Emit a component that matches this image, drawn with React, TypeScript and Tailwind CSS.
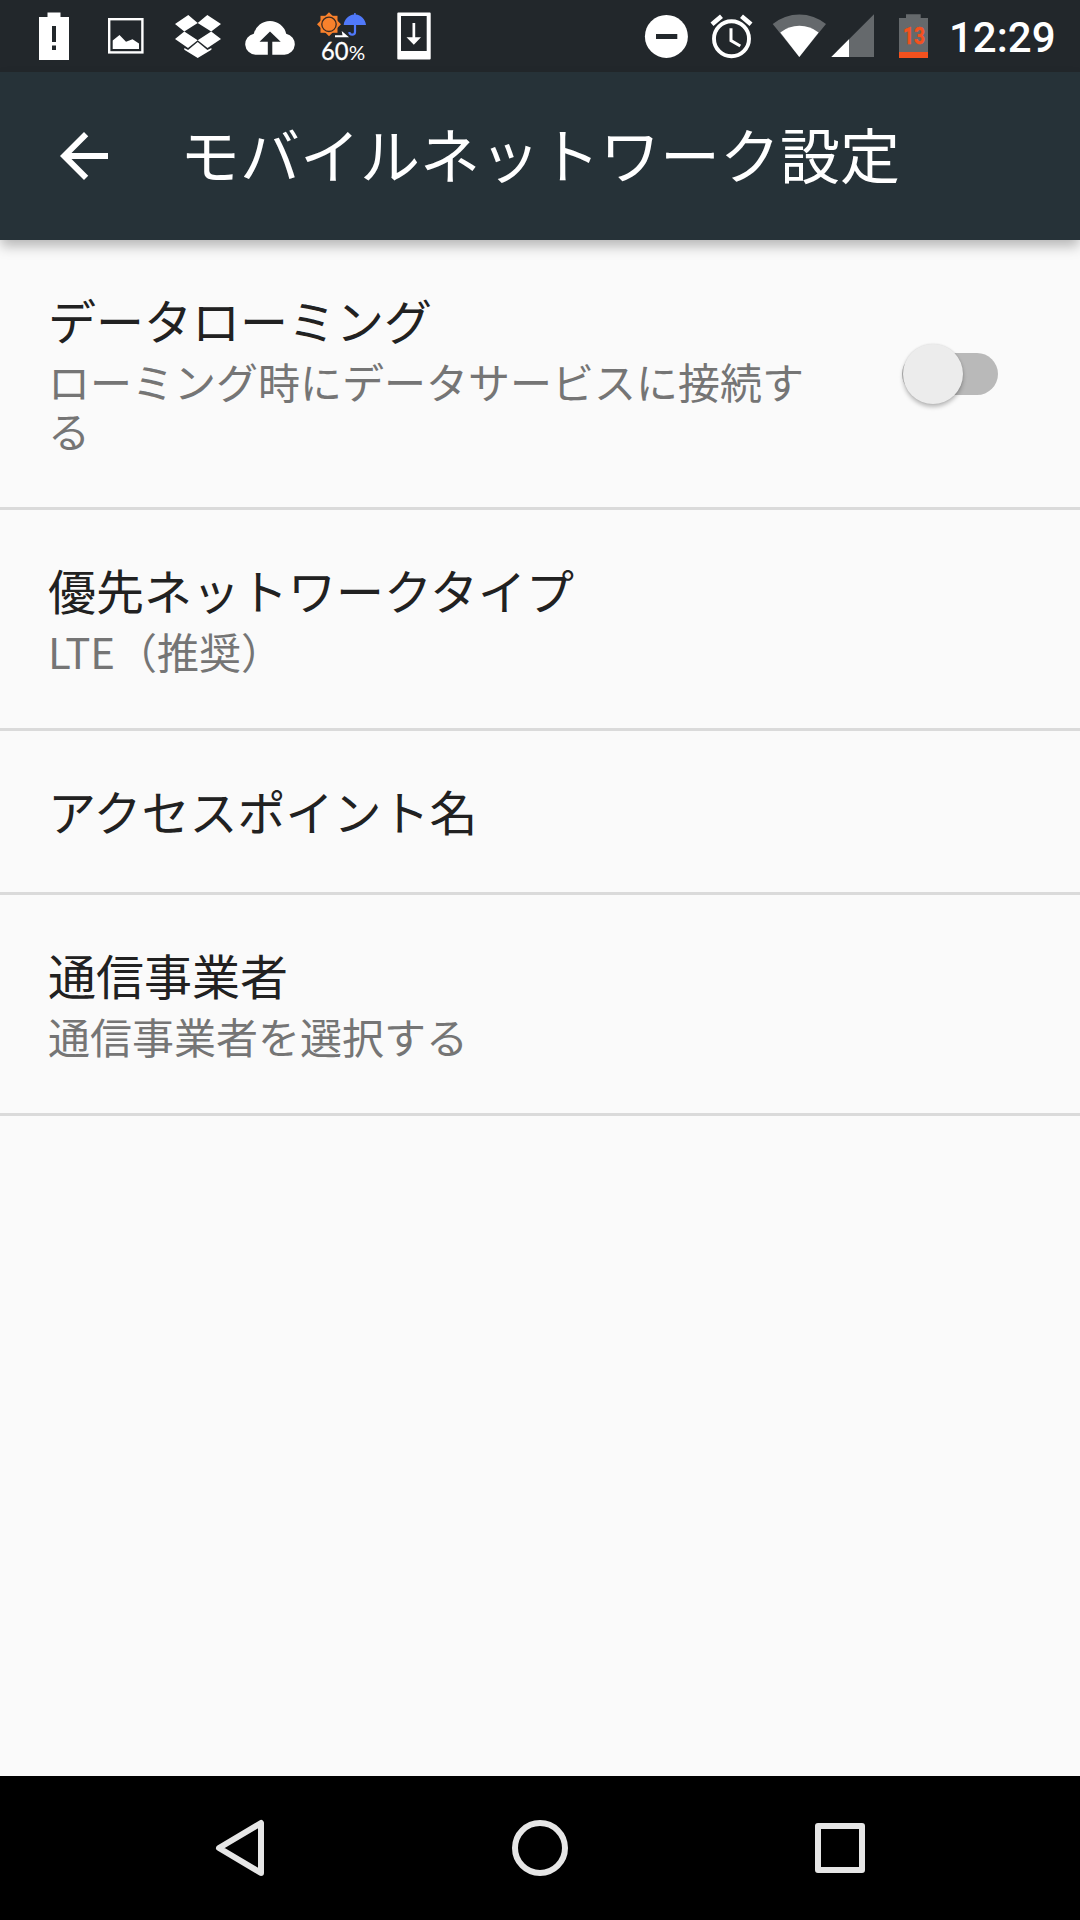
import { useState } from 'react';

interface Preference {
  id: string;
  title: string;
  summary?: string;
  hasSwitch?: boolean;
}

const preferences: Preference[] = [
  {
    id: 'roaming',
    title: 'データローミング',
    summary: 'ローミング時にデータサービスに接続する',
    hasSwitch: true,
  },
  { id: 'type', title: '優先ネットワークタイプ', summary: 'LTE（推奨）' },
  { id: 'apn', title: 'アクセスポイント名' },
  { id: 'carrier', title: '通信事業者', summary: '通信事業者を選択する' },
];

function NotificationIcons() {
  return (
    <div className="flex text-white">
      {/* battery alert */}
      <svg className="size-[72px]" viewBox="0 0 72 72" fill="currentColor">
        <path
          fillRule="evenodd"
          d="M29.5 12.5h13V17H51v43H21V17h8.500zM34 26v16h4V26zM34 45.500v4.500h4v-4.500z"
        />
      </svg>
      {/* picture */}
      <svg className="size-[72px]" viewBox="0 0 72 72" fill="currentColor">
        <rect x="19.2" y="19.200" width="33.200" height="33.200" fill="none" stroke="currentColor" strokeWidth="2.400" />
        <path d="M22.700 49v-8.500L29.500 35l6.500 6.700 6.500-2.500 6.500 4.300V49z" />
      </svg>
      {/* dropbox */}
      <svg className="size-[72px]" viewBox="0 0 72 72" fill="currentColor">
        <path d="M26.300 15 13 24l9.300 7.500L35.700 23zM45.300 15 35.700 23l13.500 8.500L59 24z" />
        <path d="M22.300 31.500 13 39l13 9 9.700-7.700zM49.200 31.500l-13.500 8.800 9.800 7.700L59 39z" />
        <path d="m22.300 48 3.800 2 9.600-8 9.700 8 4-2v1.800L35.700 58l-13.400-8.200z" />
      </svg>
      {/* upload */}
      <svg className="size-[72px]" viewBox="0 0 72 72" fill="currentColor">
        <path d="M21.500 54.700a10.600 10.600 0 0 1-1.700-21 16.700 16.700 0 0 1 32.400 0A10.600 10.600 0 0 1 50.500 54.700H38.300V41.700h8.400L36 31.500 25.500 41.700h8.300v13z" />
      </svg>
      {/* weather */}
      <svg className="size-[72px]" viewBox="0 0 72 72">
        <g fill="#f8812c">
          <rect x="14.500" y="15.800" width="17" height="17" />
          <rect x="14.500" y="15.800" width="17" height="17" transform="rotate(45 23 24.300)" />
        </g>
        <circle cx="23" cy="24.300" r="7.200" fill="none" stroke="#3a2a22" strokeWidth="1.300" />
        <path d="M37.700 25c.6-6 5-10 10.400-10.500V13h1.600v1.500C55 15 59.400 19 60 25z" fill="#5079fb" />
        <path d="M49 24v8c0 3.600-5.600 3.600-5.600 0" fill="none" stroke="#5079fb" strokeWidth="2.200" />
        <path d="M29 35.300h7.500L35.700 31l7.300 6.300H29z" fill="#fff" />
        <text x="15" y="60" fill="#fff" stroke="#fff" strokeWidth="0.300" fontSize="25" textLength="27.500" lengthAdjust="spacingAndGlyphs" className="font-['Lato',sans-serif]">60</text>
        <text x="42.700" y="60" fill="#fff" fontSize="19.500" textLength="16.500" lengthAdjust="spacingAndGlyphs" className="font-['Lato',sans-serif]">%</text>
      </svg>
      {/* system update */}
      <svg className="size-[72px]" viewBox="0 0 72 72" fill="currentColor">
        <path
          fillRule="evenodd"
          d="M20.200 12.500h31.600q.9 0 .9.900v45.200q0 .9-.9.900H20.200q-.9 0-.9-.9V13.400q0-.9.900-.9zM23 16v35h25.700V16z"
        />
        <path d="M34.500 23h2.700v14.300H43l-7.200 7.400-7.300-7.400h6z" />
      </svg>
    </div>
  );
}

function SystemIcons() {
  return (
    <div className="flex items-center text-white">
      {/* do not disturb */}
      <svg className="h-[72px] w-12" viewBox="0 0 48 72">
        <circle cx="24.400" cy="36.400" r="21.500" fill="currentColor" />
        <rect x="14" y="34" width="21.300" height="5" fill="#22282c" />
      </svg>
      {/* alarm */}
      <svg className="ml-[18px] h-[72px] w-12" viewBox="0 0 48 72" fill="none" stroke="currentColor">
        <circle cx="23.500" cy="38.700" r="17.500" strokeWidth="3.900" />
        <path d="M23 28.300v12.300l9.300 5.400" strokeWidth="3" />
        <path d="m4 24.300 9.500-8M43 24.300l-9.500-8" strokeWidth="4.600" />
      </svg>
      {/* wifi */}
      <svg className="ml-[15px] h-[72px] w-14" viewBox="0 0 56 72">
        <path d="M28.300 57 1.700 24a42.400 42.400 0 0 1 53.300 0z" fill="#65696c" />
        <path d="M28.300 57 9.300 32.400a31 31 0 0 1 38.300 0z" fill="currentColor" />
      </svg>
      {/* cell signal */}
      <svg className="ml-1 h-[72px] w-11" viewBox="0 0 44 72">
        <path d="M.3 57H43V14.300z" fill="#65696c" />
        <path d="M.3 57h17.700V39.300z" fill="currentColor" />
      </svg>
      {/* battery */}
      <svg className="ml-[21px] h-[72px] w-9" viewBox="0 0 36 72">
        <path d="M10 14.300h14.700V18H32v34H3V18h7z" fill="#65696c" />
        <rect x="3" y="52" width="29" height="6" fill="#f4511e" />
        <text x="7" y="44.300" fill="#f4511e" stroke="#f4511e" strokeWidth="0.500" fontSize="23" fontWeight="700" textLength="22" lengthAdjust="spacingAndGlyphs" className="font-['Roboto',sans-serif]">13</text>
      </svg>
      <span className="ml-[17px] w-[107px] pt-[3px] font-['Roboto',sans-serif] text-[42px] font-medium leading-[72px]">12:29</span>
    </div>
  );
}

function Switch({ checked, onToggle }: { checked: boolean; onToggle: () => void }) {
  return (
    <button
      role="switch"
      aria-checked={checked}
      onClick={onToggle}
      className="mt-0.5 flex h-[60px] w-24 items-center"
    >
      <span className="flex h-[42px] w-full items-center rounded-full bg-[#b9b9b9]">
        <span
          className={`mt-px size-[60px] shrink-0 rounded-full bg-[#ececec] shadow-[0_3px_4px_rgba(0,0,0,0.25),0_0_2px_rgba(0,0,0,0.12)] ${checked ? 'ml-auto' : 'ml-px'}`}
        />
      </span>
    </button>
  );
}

function PreferenceRow({ preference }: { preference: Preference }) {
  const [checked, setChecked] = useState(false);

  return (
    <li className="flex items-center justify-between border-b-[3px] border-[#dadada] pb-[49px] pl-12 pr-[82px] pt-[47px]">
      <div className={preference.hasSwitch ? 'w-[760px]' : ''}>
        <h2 className="text-5xl leading-[65px] text-[#212121]">{preference.title}</h2>
        {preference.summary && (
          <p className="py-1 text-[42px] leading-[49px] text-[#757575]">{preference.summary}</p>
        )}
      </div>
      {preference.hasSwitch && <Switch checked={checked} onToggle={() => setChecked(!checked)} />}
    </li>
  );
}

function NavigationBar() {
  return (
    <nav className="flex h-36 items-center bg-black px-[90px] text-[#e6e6e6]">
      <button aria-label="Back" className="flex flex-1 justify-center">
        <svg className="size-[72px]" viewBox="0 0 72 72" fill="none" stroke="currentColor" strokeWidth="6" strokeLinejoin="round">
          <path d="M57 11v50L15 36z" />
        </svg>
      </button>
      <button aria-label="Home" className="flex flex-1 justify-center">
        <svg className="size-[72px]" viewBox="0 0 72 72" fill="none" stroke="currentColor" strokeWidth="6">
          <circle cx="36" cy="36" r="25" />
        </svg>
      </button>
      <button aria-label="Overview" className="flex flex-1 justify-center">
        <svg className="size-[72px]" viewBox="0 0 72 72" fill="none" stroke="currentColor" strokeWidth="6" strokeLinejoin="round">
          <rect x="14" y="14" width="44" height="44" />
        </svg>
      </button>
    </nav>
  );
}

export default function App() {
  return (
    <div className="flex h-[1920px] w-[1080px] flex-col overflow-hidden bg-[#fafafa] font-['Noto_Sans_CJK_JP',sans-serif]">
      <div className="flex h-[72px] items-center justify-between bg-[#22272b] pl-[18px] pr-6">
        <NotificationIcons />
        <SystemIcons />
      </div>

      <header className="flex h-[168px] items-center bg-[#263238] pl-12 text-white shadow-[0_7px_12px_-1px_rgba(0,0,0,0.28)]">
        <button aria-label="Navigate up">
          <svg className="size-[72px]" viewBox="0 0 24 24" fill="currentColor">
            <path d="M20 11H7.830l5.590-5.590L12 4l-8 8 8 8 1.410-1.410L7.830 13H20z" />
          </svg>
        </button>
        <h1 className="mb-1.5 ml-[60px] text-6xl leading-[72px]">モバイルネットワーク設定</h1>
      </header>

      <ul className="flex-1">
        {preferences.map((preference) => (
          <PreferenceRow key={preference.id} preference={preference} />
        ))}
      </ul>

      <NavigationBar />
    </div>
  );
}
